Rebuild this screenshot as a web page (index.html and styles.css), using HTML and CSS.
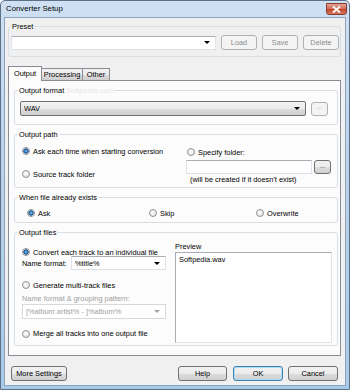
FILE: index.html
```html
<!DOCTYPE html>
<html>
<head>
<meta charset="UTF-8">
<title>Converter Setup</title>
<link rel="stylesheet" href="styles.css">
</head>
<body>
	<div class="window">
		<div class="titlebar">
			<span class="title">Converter Setup</span>
			<span class="close">
				<svg width="9" height="7" viewBox="0 0 9 7"><path d="M1 0.5 L8 6.5 M8 0.5 L1 6.5" stroke="#fff" stroke-width="1.8"/></svg>
			</span>
		</div>

		<div class="client">
			<!-- 프리셋 -->
			<fieldset class="group preset">
				<legend>Preset</legend>
				<div class="preset-row">
					<div class="combo edit preset-combo"><span class="arrow"></span></div>
					<div class="btn off">Load</div>
					<div class="btn off">Save</div>
					<div class="btn off">Delete</div>
				</div>
			</fieldset>

			<div class="tabs">
				<span class="tab active">Output</span>
				<span class="tab tab-proc">Processing</span>
				<span class="tab tab-other">Other</span>
			</div>

			<div class="panel">
				<fieldset class="group">
					<legend>Output format<span class="mark">Softpedia.com</span></legend>
					<div class="fmt-row">
						<div class="combo list"><span class="val">WAV</span><span class="arrow"></span></div>
						<div class="btn off dots">...</div>
					</div>
				</fieldset>

				<fieldset class="group gap">
					<legend>Output path</legend>
					<div class="path">
						<div class="path-left">
							<div class="opt"><span class="radio on"></span>Ask each time when starting conversion</div>
							<div class="opt second"><span class="radio"></span>Source track folder</div>
						</div>
						<div class="path-right">
							<div class="opt"><span class="radio"></span>Specify folder:</div>
							<div class="folder-row">
								<div class="textbox"></div>
								<div class="btn dots">...</div>
							</div>
							<div class="note">(will be created if it doesn't exist)</div>
						</div>
					</div>
				</fieldset>

				<fieldset class="group gap">
					<legend>When file already exists</legend>
					<div class="exists">
						<div class="opt"><span class="radio on"></span>Ask</div>
						<div class="opt"><span class="radio"></span>Skip</div>
						<div class="opt"><span class="radio"></span>Overwrite</div>
					</div>
				</fieldset>

				<fieldset class="group gap">
					<legend>Output files</legend>
					<div class="files">
						<div class="files-left">
							<div class="opt first"><span class="radio on"></span>Convert each track to an individual file</div>
							<div class="name-row">
								<span class="name-label">Name format:</span>
								<div class="combo edit name-combo"><span class="val">%title%</span><span class="arrow"></span></div>
							</div>
							<div class="opt multi"><span class="radio"></span>Generate multi-track files</div>
							<div class="grey-label">Name format &amp; grouping pattern:</div>
							<div class="combo edit disabled"><span class="val">[%album artist% - ]%album%</span><span class="arrow"></span></div>
							<div class="opt merge"><span class="radio"></span>Merge all tracks into one output file</div>
						</div>
						<div class="files-right">
							<div class="preview-label">Preview</div>
							<div class="preview">Softpedia.wav</div>
						</div>
					</div>
				</fieldset>
			</div>

			<div class="footer">
				<div class="btn more">More Settings</div>
				<div class="btn help">Help</div>
				<div class="btn ok">OK</div>
				<div class="btn cancel">Cancel</div>
			</div>
		</div>
	</div>
</body>
</html>
```

FILE: styles.css
```css
body {
	margin: 0;
	font-family: "Liberation Sans", Arial, sans-serif;
	font-size: 7.4px;
	color: #000;
	background: #fff;
}

/* 창 테두리 */
.window {
	width: 350px;
	height: 390px;
	box-sizing: border-box;
	border: 1px solid #5d7088;
	border-radius: 5px 5px 0 0;
	background: linear-gradient(#cfe0f3, #bcd3ec 40%, #a6cbe8);
	display: flex;
	flex-direction: column;
}

.titlebar {
	height: 16px;
	display: flex;
	align-items: flex-start;
	padding-left: 5px;
}

.title {
	font-size: 7.8px;
	line-height: 16px;
}

.close {
	margin: 2px 2px 0 auto;
	width: 21px;
	height: 12px;
	box-sizing: border-box;
	border: 1px solid #8a3a2c;
	border-radius: 0 0 3px 3px;
	background: linear-gradient(#e3a597, #d26a56 50%, #c3412a 51%, #d57a61);
	display: flex;
	align-items: center;
	justify-content: center;
}

.client {
	flex: 1;
	margin: 0 3px 3px 3px;
	border: 1px solid #8fa3bb;
	background: #f0f0f0;
	display: flex;
	flex-direction: column;
}

/* 그룹 박스 */
.group {
	margin: 0;
	border: 1px solid #d5dfe5;
	border-radius: 3px;
	padding: 0 0 0 3px;
	min-width: 0;
}

.group legend {
	padding: 0 1px;
	line-height: 9px;
	color: #000;
}

.mark {
	color: #e6e6e6;
	margin-left: 2px;
}

.gap {
	margin-top: 5px;
}

.preset {
	margin: 4px 4px 0 3px;
	padding: 4px 1px 6px 2px;
}

.preset-row {
	display: flex;
	align-items: center;
	gap: 5px;
}

.preset-combo {
	flex: 1;
	height: 14px;
}

.preset-row .btn {
	width: 36px;
}

/* 버튼 */
.btn {
	height: 15px;
	box-sizing: border-box;
	border: 1px solid #707070;
	border-radius: 3px;
	background: linear-gradient(#f2f2f2, #ebebeb 50%, #dddddd 51%, #cfcfcf);
	display: flex;
	align-items: center;
	justify-content: center;
	line-height: 9px;
}

.btn.off {
	border-color: #adb2b5;
	background: #f4f4f4;
	color: #8d8d8d;
}

.btn.dots {
	width: 17px;
	height: 14px;
	font-size: 6px;
	padding-bottom: 2px;
}

.combo {
	box-sizing: border-box;
	display: flex;
	align-items: center;
	padding: 0 5px 0 3px;
	line-height: 9px;
}

.combo .val {
	flex: 1;
	white-space: nowrap;
	overflow: hidden;
}

.combo.edit {
	background: #fff;
	border: 1px solid #dbdfe6;
	border-top-color: #abadb3;
	border-left-color: #e2e3ea;
	border-right-color: #e2e3ea;
}

.combo.list {
	flex: 1;
	height: 15px;
	border: 1px solid #707070;
	border-radius: 2px;
	background: linear-gradient(#f2f2f2, #ebebeb 50%, #dddddd 51%, #cfcfcf);
}

.combo.disabled {
	width: 144px;
	height: 15px;
	margin-top: 1px;
	border-color: #d9d9d9;
	color: #a0a0a0;
}

.arrow {
	margin-left: auto;
	width: 0;
	height: 0;
	border-left: 3px solid transparent;
	border-right: 3px solid transparent;
	border-top: 3px solid #000;
}

.combo.disabled .arrow {
	border-top-color: #a0a0a0;
}

/* 탭 */
.tabs {
	display: flex;
	align-items: flex-end;
	height: 14px;
	margin: 9px 0 0 3px;
}

.tab {
	height: 12px;
	box-sizing: border-box;
	border: 1px solid #898c95;
	border-bottom: none;
	background: linear-gradient(#f2f2f2, #ebebeb 50%, #dddddd 51%, #cfcfcf);
	display: flex;
	align-items: center;
	justify-content: center;
	line-height: 9px;
}

.tab.active {
	width: 34px;
	height: 15px;
	margin-bottom: -1px;
	background: #fcfcfc;
	position: relative;
	z-index: 1;
	padding-bottom: 1px;
}

.tab-proc {
	width: 42px;
	margin-left: -1px;
}

.tab-other {
	width: 28px;
	margin-left: -1px;
}

.panel {
	margin: 0 4px 0 3px;
	border: 1px solid #898c95;
	background: #fcfcfc;
	padding: 5px 2px 9px 5px;
}

.panel .group:first-child {
	padding: 6px 9px 8px 3px;
}

.fmt-row {
	display: flex;
	align-items: center;
	gap: 5px;
	margin-left: 2px;
}

/* 라디오 */
.opt {
	display: flex;
	align-items: center;
	height: 10px;
	white-space: nowrap;
}

.radio {
	width: 8px;
	height: 8px;
	box-sizing: border-box;
	border: 1px solid #8e9193;
	border-radius: 50%;
	background: radial-gradient(circle at 40% 40%, #ffffff, #dcdcdc);
	margin-right: 3px;
	flex-shrink: 0;
}

.radio.on {
	background: radial-gradient(circle, #8fd0f5 0, #2c72b8 1.6px, #1b4f8e 2.4px, #f2f2f2 2.9px);
}

.path {
	display: flex;
	margin: 0 6px 3px 4px;
}

.path-left {
	width: 164px;
	padding-top: 7px;
}

.path-left .second {
	margin-top: 13px;
}

.path-right {
	flex: 1;
	padding-top: 8px;
}

.path-right .opt {
	padding-left: 1px;
}

.folder-row {
	display: flex;
	gap: 2px;
	margin-top: 3px;
}

.textbox {
	flex: 1;
	height: 14px;
	box-sizing: border-box;
	background: #fff;
	border: 1px solid #dbdfe6;
	border-top-color: #abadb3;
	border-left-color: #e2e3ea;
	border-right-color: #e2e3ea;
}

.folder-row .btn.dots {
	height: 14px;
}

.note {
	margin-top: 1px;
	padding-left: 4px;
	line-height: 9px;
}

.exists {
	display: grid;
	grid-template-columns: 122px 107px auto;
	margin: 6px 0 4px 9px;
}

.files {
	display: flex;
	margin: 0 5px 2px 4px;
}

.files-left {
	width: 153px;
	padding-top: 11px;
}

.files-left .first {
	height: 8px;
}

.name-row {
	display: flex;
	align-items: center;
	height: 14px;
}

.name-label {
	width: 49px;
}

.name-combo {
	width: 95px;
	height: 14px;
}

.files-left .multi {
	margin-top: 10px;
}

.grey-label {
	margin-top: 4px;
	line-height: 9px;
	color: #a0a0a0;
}

.files-left .merge {
	margin-top: 10px;
	height: 9px;
}

.files-right {
	flex: 1;
	padding-top: 5px;
}

.preview-label {
	line-height: 9px;
}

.preview {
	margin-top: 1px;
	height: 91px;
	box-sizing: border-box;
	background: #fff;
	border: 1px solid #abadb3;
	border-right-color: #e2e3ea;
	border-bottom-color: #e2e3ea;
	padding: 2px 3px;
	line-height: 9px;
}

/* 하단 버튼 */
.footer {
	display: flex;
	margin-top: 10px;
	padding: 0 7px 0 6px;
}

.more {
	width: 56px;
}

.help {
	width: 49px;
	margin-left: auto;
}

.ok {
	width: 50px;
	margin-left: 6px;
	border-color: #3c7fb1;
	box-shadow: inset 0 0 0 1px #aedcf7;
}

.cancel {
	width: 50px;
	margin-left: 5px;
}
```
